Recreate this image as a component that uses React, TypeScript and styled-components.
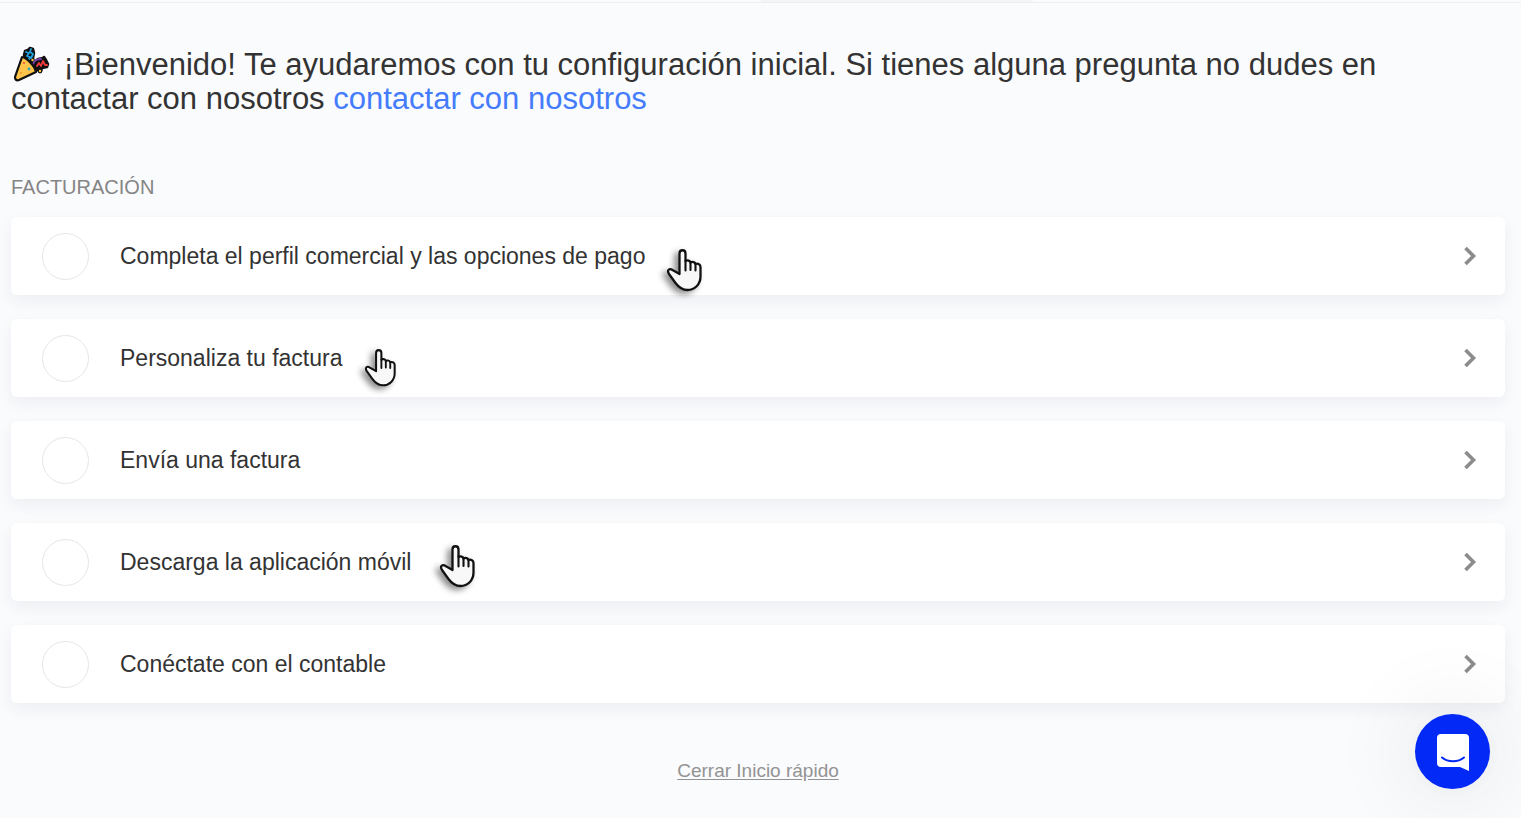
import React from "react";
import styled, { createGlobalStyle } from "styled-components";

const GlobalStyle = createGlobalStyle`
  *, *::before, *::after { box-sizing: border-box; }
  body {
    margin: 0;
    background: #fafbfd;
    color: #333;
    font-family: "Liberation Sans", Arial, sans-serif;
  }
`;

const TopBar = styled.div`
  display: flex;
  justify-content: center;
  height: 3px;
  border-bottom: 1px solid #eeeff1;
`;

const TopTab = styled.div`
  width: 272px;
  margin-left: 272px;
  background: #f4f5f7;
  height: 2px;
`;

const Page = styled.main`
  padding: 45px 16px 36px 11px;
`;

const Welcome = styled.h1`
  margin: 0;
  font-size: 31px;
  line-height: 34px;
  font-weight: 400;
`;

const Popper = styled.svg`
  width: 36px;
  height: 36px;
  margin: -2px 5px 0 3px;
  vertical-align: top;
`;

const ContactLink = styled.a`
  color: #447cfb;
  text-decoration: none;
`;

const SectionTitle = styled.h2`
  margin: 59px 0 18px;
  font-size: 20px;
  line-height: 24px;
  font-weight: 400;
  color: #858585;
`;

const TaskList = styled.ul`
  display: flex;
  flex-direction: column;
  gap: 24px;
  margin: 0;
  padding: 0;
  list-style: none;
`;

const TaskCard = styled.li`
  display: flex;
  align-items: center;
  height: 78px;
  padding-left: 31px;
  background: #fff;
  border-radius: 6px;
  box-shadow: 0 6px 16px rgba(30, 35, 45, 0.06);
`;

const TaskCheck = styled.input`
  appearance: none;
  flex: none;
  width: 47px;
  height: 47px;
  margin: 0;
  border: 1px solid #e6e6e6;
  border-radius: 50%;
  background: #fff;
`;

const TaskButton = styled.button`
  display: flex;
  flex: 1;
  align-items: center;
  justify-content: space-between;
  align-self: stretch;
  padding: 0 28px 0 31px;
  border: 0;
  background: none;
  color: #333;
  font-family: inherit;
  font-size: 23px;
  line-height: 28px;
  text-align: left;
  cursor: pointer;
`;

const TaskLabel = styled.span`
  position: relative;
`;

const Hand = styled.svg<{ $size: number; $top: number; $gap: number }>`
  position: absolute;
  left: 100%;
  top: ${(p) => p.$top}px;
  margin-left: ${(p) => p.$gap}px;
  width: ${(p) => p.$size}px;
  overflow: visible;
  filter: drop-shadow(-4px 3px 3px rgba(0, 0, 0, 0.45));
`;

const Chevron = styled.svg`
  width: 14px;
  height: 20px;
`;

const Footer = styled.footer`
  display: flex;
  justify-content: center;
  margin-top: 56px;
`;

const CloseLink = styled.a`
  color: #939393;
  font-size: 19px;
  line-height: 24px;
  text-underline-offset: 2px;
`;

const ChatButton = styled.button`
  position: fixed;
  right: 31px;
  bottom: 29px;
  display: grid;
  place-items: center;
  width: 75px;
  height: 75px;
  padding: 0;
  border: 0;
  border-radius: 50%;
  background: #0229f5;
  box-shadow: 0 0 80px 20px rgba(0, 0, 0, 0.05), 0 2px 20px rgba(0, 0, 0, 0.04);
  cursor: pointer;
`;

const ChatIcon = styled.svg`
  width: 34px;
  height: 38px;
`;

type Pointer = { size: number; top: number; gap: number };

const tasks: { label: string; pointer?: Pointer }[] = [
  {
    label: "Completa el perfil comercial y las opciones de pago",
    pointer: { size: 35, top: 7, gap: 22 },
  },
  { label: "Personaliza tu factura", pointer: { size: 31, top: 5, gap: 23 } },
  { label: "Envía una factura" },
  {
    label: "Descarga la aplicación móvil",
    pointer: { size: 35, top: -3, gap: 29 },
  },
  { label: "Conéctate con el contable" },
];

function PartyPopper() {
  return (
    <Popper viewBox="0 0 36 36" role="img" aria-label="Fiesta">
      <g strokeLinecap="round" strokeLinejoin="round" fill="none">
        <path
          d="M11 5l3-1 2-2 3 1 1 4-1 5 1 4 4-3 5-1 1-1 2 3 2 4-1 3-5 1-1 3-4-1-6-6-6-5-1-4z"
          fill="#111"
          stroke="#111"
          strokeWidth="2.5"
        />
        <path d="M12 6l3 1-2 3 3 1-1 2M17 3l-1 3 3 2-2 4" stroke="#22a3e0" strokeWidth="1.8" />
        <path d="M19 18c1-3 4-5 8-5" stroke="#7a3fb0" strokeWidth="1.8" />
        <path d="M23 20l2-3 2 3 2-5 2 4 2 0" stroke="#f23b3c" strokeWidth="1.8" />
        <path
          d="M8 11c5 1 13 9 14 15L5 34c-3 1-4-1-4-3z"
          fill="#ffc54a"
          stroke="#111"
          strokeWidth="2.2"
        />
      </g>
      <circle cx="10" cy="17" r="1.1" fill="#f05436" />
      <circle cx="15" cy="23" r="1.4" fill="#27a7b6" />
      <circle cx="7" cy="27" r="1" fill="#f29328" />
      <circle cx="26" cy="25" r="2.4" fill="#111" />
      <circle cx="26" cy="25" r="1.2" fill="#ffca3c" />
      <circle cx="18.500" cy="14" r="1.2" fill="#ffca3c" />
    </Popper>
  );
}

function PointingHand({ size, top, gap }: Pointer) {
  return (
    <Hand $size={size} $top={top} $gap={gap} viewBox="0 0 35 42" aria-hidden="true">
      <path
        d="M12.500 25V4.500c0-4.300 6-4.300 6 0V12c2-1.200 4.700-.2 5 1.500 2-1.200 4.700-.2 5 1.500 2.500-1 5 .5 5 3v9.500c0 8-6 13.500-13 13.500-6 0-9-3-12-7l-6.500-9c-2.500-4 .5-6 3.500-4z"
        fill="#f8f8f8"
        stroke="#111"
        strokeWidth="2.3"
        strokeLinejoin="round"
      />
      <path
        d="M18.500 12v9.500M23.500 13.500V21M28.500 15v6.500"
        fill="none"
        stroke="#111"
        strokeWidth="2.1"
        strokeLinecap="round"
      />
    </Hand>
  );
}

export default function App() {
  return (
    <>
      <GlobalStyle />
      <TopBar>
        <TopTab />
      </TopBar>
      <Page>
        <Welcome>
          <PartyPopper /> ¡Bienvenido! Te ayudaremos con tu configuración inicial. Si
          tienes alguna pregunta no dudes en contactar con nosotros{" "}
          <ContactLink href="#contacto">contactar con nosotros</ContactLink>
        </Welcome>
        <SectionTitle>FACTURACIÓN</SectionTitle>
        <TaskList>
          {tasks.map(({ label, pointer }) => (
            <TaskCard key={label}>
              <TaskCheck type="checkbox" aria-label={label} />
              <TaskButton type="button">
                <TaskLabel>
                  {label}
                  {pointer && <PointingHand {...pointer} />}
                </TaskLabel>
                <Chevron viewBox="0 0 14 20" aria-hidden="true">
                  <path d="M2.5 2l8 8-8 8" fill="none" stroke="#8c8c8c" strokeWidth="3.6" />
                </Chevron>
              </TaskButton>
            </TaskCard>
          ))}
        </TaskList>
        <Footer>
          <CloseLink href="#cerrar">Cerrar Inicio rápido</CloseLink>
        </Footer>
      </Page>
      <ChatButton type="button" aria-label="Abrir chat">
        <ChatIcon viewBox="0 0 34 38" aria-hidden="true">
          <path
            d="M5 1h24a4 4 0 0 1 4 4v33c-3-1-6-3-9-4H5a4 4 0 0 1-4-4V5a4 4 0 0 1 4-4z"
            fill="#fff"
          />
          <path
            d="M6 24.500c6 5 16 5 22 0"
            fill="none"
            stroke="#0229f5"
            strokeWidth="2"
            strokeLinecap="round"
          />
        </ChatIcon>
      </ChatButton>
    </>
  );
}
